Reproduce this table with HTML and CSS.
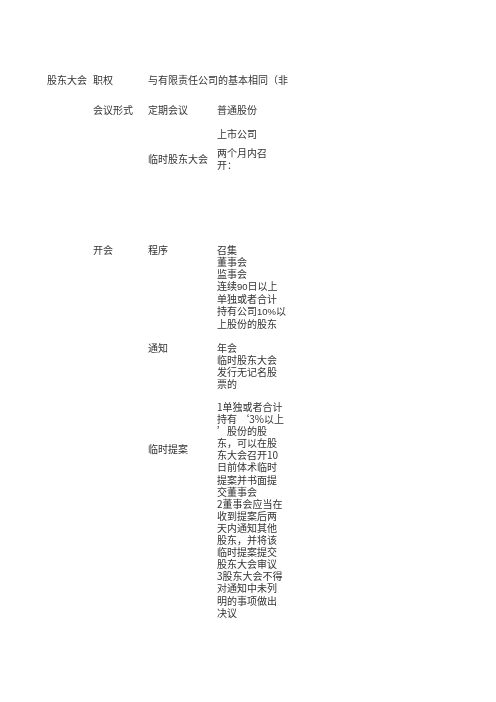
FILE: index.html
```html
<!DOCTYPE html>
<html lang="zh-CN">
<head>
<meta charset="utf-8">
<title>股东大会</title>
<link rel="stylesheet" href="styles.css">
</head>
<body>
<div class="sheet">
  <div class="row r1">
    <div class="cell">股东大会</div>
    <div class="cell">职权</div>
    <div class="cell span">与有限责任公司的基本相同（非</div>
  </div>
  <div class="row r2">
    <div class="cell"></div>
    <div class="cell">会议形式</div>
    <div class="cell">定期会议</div>
    <div class="cell">普通股份</div>
  </div>
  <div class="row r3">
    <div class="cell"></div>
    <div class="cell"></div>
    <div class="cell"></div>
    <div class="cell">上市公司</div>
  </div>
  <div class="row r4">
    <div class="cell"></div>
    <div class="cell"></div>
    <div class="cell">临时股东大会</div>
    <div class="cell">两个月内召<br>开：</div>
  </div>
  <div class="row r5">
    <div class="cell"></div>
    <div class="cell">开会</div>
    <div class="cell">程序</div>
    <div class="cell">召集<br>董事会<br>监事会<br>连续<span class="num">90</span>日以上<br>单独或者合计<br>持有公司<span class="num">10%</span>以<br>上股份的股东</div>
  </div>
  <div class="row r6">
    <div class="cell"></div>
    <div class="cell"></div>
    <div class="cell">通知</div>
    <div class="cell">年会<br>临时股东大会<br>发行无记名股<br>票的</div>
  </div>
  <div class="row r7">
    <div class="cell"></div>
    <div class="cell"></div>
    <div class="cell label">临时提案</div>
    <div class="cell dense">1单独或者合计<br>持有 ‘3%以上<br>’股份的股<br>东，可以在股<br>东大会召开10<br>日前体术临时<br>提案并书面提<br>交董事会<br>2董事会应当在<br>收到提案后两<br>天内通知其他<br>股东，并将该<br>临时提案提交<br>股东大会审议<br>3股东大会不得<br>对通知中未列<br>明的事项做出<br>决议</div>
  </div>
</div>
</body>
</html>
```

FILE: styles.css
```css
html, body {
  margin: 0;
  padding: 0;
  background: #ffffff;
}

body {
  font-family: "Noto Sans CJK SC", "Noto Sans", sans-serif;
  font-size: 10px;
  line-height: 12px;
  color: #333333;
  -webkit-font-smoothing: antialiased;
}

.sheet {
  padding: 74px 0 0 47px;
  filter: grayscale(1);
}

.row {
  display: grid;
  grid-template-columns: 46px 55px 69px 120px;
  align-items: start;
}

.cell {
  white-space: nowrap;
}

.span {
  grid-column: 3 / 5;
}

.r2 { margin-top: 18px; }
.r3 { margin-top: 12px; }
.r4 { margin-top: 7px; align-items: center; }
.r5 { margin-top: 73px; }
.r6 { margin-top: 12px; }
.r7 { margin-top: 11px; }

.num {
  font-family: "Liberation Sans", "Noto Sans", sans-serif;
  font-size: 9.5px;
}

.label {
  padding-top: 42px;
}

.dense {
  line-height: 12.1px;
}
```
